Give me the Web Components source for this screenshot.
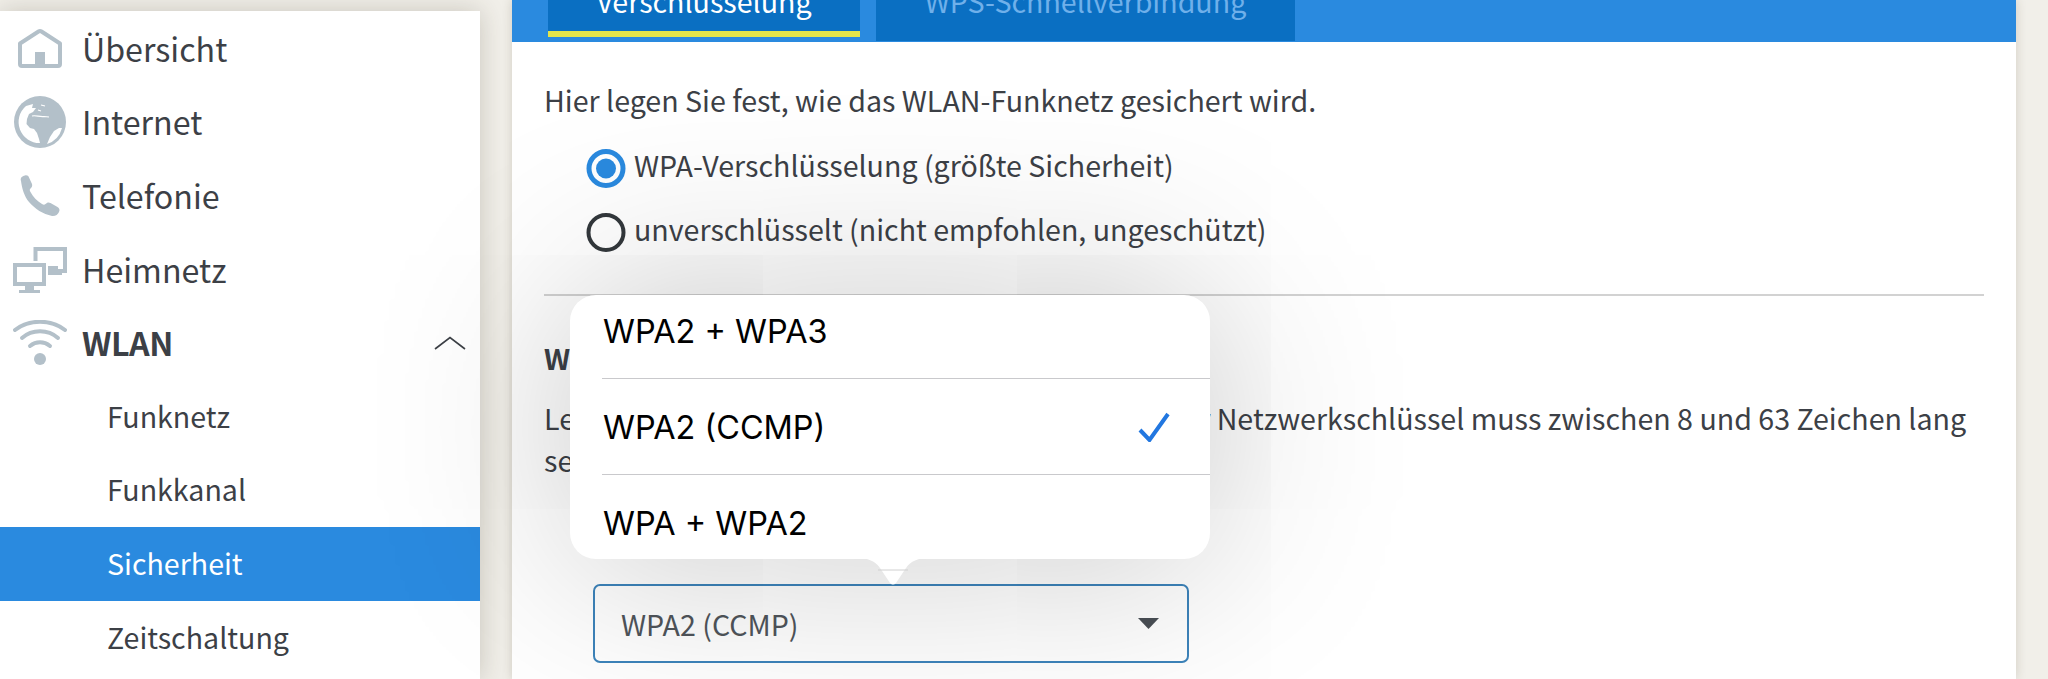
<!DOCTYPE html>
<html lang="de">
<head>
<meta charset="utf-8">
<title>WLAN Sicherheit</title>
<style>
  html, body { margin: 0; height: 679px; overflow: hidden; }
  body {
    display: flex;
    align-items: flex-start;
    background: #f1efe9;
    color: #3c4046;
    font-family: "Noto Sans CJK JP", "Open Sans", sans-serif;
  }
</style>
</head>
<body>
  <side-nav>
    <nav-item icon="home">Übersicht</nav-item>
    <nav-item icon="globe">Internet</nav-item>
    <nav-item icon="phone">Telefonie</nav-item>
    <nav-item icon="network">Heimnetz</nav-item>
    <nav-item icon="wifi" open>WLAN</nav-item>
    <nav-item sub>Funknetz</nav-item>
    <nav-item sub>Funkkanal</nav-item>
    <nav-item sub active>Sicherheit</nav-item>
    <nav-item sub>Zeitschaltung</nav-item>
  </side-nav>
  <main-panel>
    <tab-bar slot="tabs">
      <tab-item active>Verschlüsselung</tab-item>
      <tab-item style="width:419px;margin-left:16px">WPS-Schnellverbindung</tab-item>
    </tab-bar>
    <p class="intro">Hier legen Sie fest, wie das WLAN-Funknetz gesichert wird.</p>
    <radio-row checked>WPA-Verschlüsselung (größte Sicherheit)</radio-row>
    <radio-row>unverschlüsselt (nicht empfohlen, ungeschützt)</radio-row>
    <hr>
    <h2>WLAN-Netzwerkschlüssel</h2>
    <p class="key">Legen Sie einen WLAN-Netzwerkschlüssel fest. Der Netzwerkschlüssel muss zwischen 8 und 63 Zeichen lang sein.</p>
    <select-box>WPA2 (CCMP)</select-box>
    <picker-popover>
      <picker-option>WPA2 + WPA3</picker-option>
      <picker-option selected>WPA2 (CCMP)</picker-option>
      <picker-option last>WPA + WPA2</picker-option>
    </picker-popover>
  </main-panel>

<script>
const ICONS = {
  home: '<svg viewBox="0 0 54 54" width="54" height="54"><path d="M7 21.5 25.5 9.5q1.5-1 3 0L47 21.5V42a2 2 0 0 1-2 2H9a2 2 0 0 1-2-2Z" fill="none" stroke="#b3c0c9" stroke-width="4" stroke-linejoin="round"/><rect x="22" y="30" width="10" height="14" fill="#b3c0c9"/></svg>',
  globe: '<svg viewBox="0 0 54 54" width="54" height="54"><circle cx="27" cy="27" r="26" fill="#b3c0c9"/><path d="M13 11 20 9 19 13 23 13 20 17 16 19 14 24 13.500 29 17 33 21 34 24 38 26 44 27 48A21 21 0 0 1 13 11Z" fill="#fff"/><path d="M49 33 46 33 41 36 37 42 34 49A23 23 0 0 0 49 33Z" fill="#fff"/><path d="M19 21C23 20 26 22 31 21.500L36 22M28 10l4 1M25 15l3 1" fill="none" stroke="#fff" stroke-width="1.200"/></svg>',
  phone: '<svg viewBox="0 0 54 54" width="54" height="54"><path d="M8 12C7 9 9 7 12 6.500 14 6 15.500 7 16 8.500L19 15C19.500 17 19 18 17.500 19.500 16.500 20.500 16.500 21.500 17.500 23 20 28 24 32 29 35 30.500 36 31.500 36 32.500 35 34 33.500 35.500 33 37.500 34L44.500 38C46.500 39 47 41 46 43 45 45.500 42 47.500 39 47 30 45 22 40 16 33 11 27 9 19 8 12Z" fill="#b3c0c9"/></svg>',
  network: '<svg viewBox="0 0 54 46" width="54" height="46"><path d="M22.500 14V2H52V24H40" fill="none" stroke="#b3c0c9" stroke-width="4"/><path d="M35 19H45V23H35ZM35 23H49V28H35Z" fill="#b3c0c9"/><rect x="2" y="18" width="29" height="19" fill="#fff" stroke="#b3c0c9" stroke-width="4"/><path d="M12 39H21V43H12ZM6 43H27V46H6Z" fill="#b3c0c9"/></svg>',
  wifi: '<svg viewBox="0 0 54 46" width="54" height="46"><g fill="none" stroke="#b3c0c9" stroke-width="4" stroke-linecap="round"><path d="M2 10C16-1 38-1 52 10"/><path d="M9 18C19 9 35 9 45 18"/><path d="M17 26c6-5 14-5 20 0"/></g><circle cx="27" cy="39" r="6" fill="#b3c0c9"/></svg>'
};

class SideNav extends HTMLElement {
  constructor() {
    super();
    this.attachShadow({mode: 'open'}).innerHTML = `
      <style>
        :host {
          display: block;
          flex: none;
          width: 480px;
          height: 668px;
          margin-top: 11px;
          padding-top: 1px;
          box-sizing: border-box;
          background: #fff;
          box-shadow: 0 0 24px rgba(60, 50, 30, .22);
        }
      </style>
      <slot></slot>`;
  }
}

class NavItem extends HTMLElement {
  constructor() {
    super();
    const icon = ICONS[this.getAttribute('icon')] || '';
    const chevron = this.hasAttribute('open')
      ? '<svg class="chev" width="32" height="14" viewBox="0 0 32 14"><path d="M1 13 16 1.500 31 13" fill="none" stroke="#3c4046" stroke-width="1.600"/></svg>' : '';
    this.attachShadow({mode: 'open'}).innerHTML = `
      <style>
        :host {
          display: flex;
          align-items: center;
          height: 73.6px;
          padding-left: 13px;
          font-size: 32.2px;
          position: relative;
        }
        .ico { flex: none; width: 54px; display: flex; justify-content: center; }
        svg { display: block; }
        .label { margin-left: 15px; line-height: 44px; padding-bottom: 2px; }
        :host([open]) .label { font-weight: 700; letter-spacing: -.4px; }
        :host([sub]) { padding-left: 107px; font-size: 28.6px; }
        :host([sub]) .ico { display: none; }
        :host([sub]) .label { margin-left: 0; }
        :host([active]) { background: #2a8adf; color: #fff; }
        .chev { margin-left: auto; margin-right: 14px; }
      </style>
      <span class="ico">${icon}</span><span class="label"><slot></slot></span>${chevron}`;
  }
}

class MainPanel extends HTMLElement {
  constructor() {
    super();
    this.attachShadow({mode: 'open'}).innerHTML = `
      <style>
        :host {
          display: block;
          flex: none;
          width: 1504px;
          height: 679px;
          margin-left: 32px;
          background: #fff;
          position: relative;
          box-shadow: 0 0 10px rgba(60, 50, 30, .18);
        }
        .body { padding: 39px 32px 0 32px; font-size: 28.6px; line-height: 42px; }
      </style>
      <slot name="tabs"></slot>
      <div class="body"><slot></slot></div>`;
  }
  connectedCallback() {
    // the plain paragraphs and headings sit in the light DOM, style them from here
    if (document.getElementById('panel-style')) return;
    const s = document.createElement('style');
    s.id = 'panel-style';
    s.textContent = `
      main-panel .intro { margin: -2px 0 13px; }
      main-panel hr { height: 2px; border: 0; margin: 32px 0 41px; background: #d2d2d2; }
      main-panel h2 { margin: 0; font: 700 28.6px/42px "Noto Sans CJK JP", sans-serif; }
      main-panel .key { margin: 18px 0 103px; }`;
    document.head.appendChild(s);
  }
}

class TabBar extends HTMLElement {
  constructor() {
    super();
    this.attachShadow({mode: 'open'}).innerHTML = `
      <style>
        :host {
          display: flex;
          height: 42px;
          padding-left: 36px;
          background: #2a8adf;
          overflow: hidden;
        }
      </style>
      <slot></slot>`;
  }
}

class TabItem extends HTMLElement {
  constructor() {
    super();
    this.attachShadow({mode: 'open'}).innerHTML = `
      <style>
        :host {
          flex: none;
          display: flex;
          align-items: flex-end;
          justify-content: center;
          box-sizing: border-box;
          width: 312px;
          height: 41px;
          padding-bottom: 19px;
          background: #0a6fc2;
          color: #6fb0ea;
          font-size: 28.6px;
          line-height: 42px;
        }
        :host([active]) {
          height: 37px;
          padding-bottom: 9px;
          color: #fff;
          border-bottom: 6px solid #e4e54a;
        }
      </style>
      <slot></slot>`;
  }
}

class RadioRow extends HTMLElement {
  constructor() {
    super();
    const mark = this.hasAttribute('checked')
      ? '<circle cx="20" cy="19.500" r="17" fill="none" stroke="#2a8adf" stroke-width="5"/><circle cx="20" cy="19.500" r="10" fill="#2a8adf"/>'
      : '<circle cx="20" cy="19.500" r="17.500" fill="none" stroke="#33383c" stroke-width="4"/>';
    this.attachShadow({mode: 'open'}).innerHTML = `
      <style>
        :host {
          display: flex;
          align-items: center;
          gap: 8px;
          height: 64px;
          padding-left: 42px;
        }
        svg { flex: none; display: block; margin-top: 4px; }
        span { padding-bottom: 2px; }
      </style>
      <svg width="40" height="39" viewBox="0 0 40 39">${mark}</svg><span><slot></slot></span>`;
  }
}

class SelectBox extends HTMLElement {
  constructor() {
    super();
    this.attachShadow({mode: 'open'}).innerHTML = `
      <style>
        :host {
          display: flex;
          align-items: center;
          justify-content: space-between;
          box-sizing: border-box;
          width: 596px;
          height: 79px;
          margin-left: 49px;
          padding: 0 28px 0 26px;
          border: 2px solid #3d84bb;
          border-radius: 7px;
          font-size: 28.6px;
          color: #50555b;
        }
        svg { display: block; }
      </style>
      <span><slot></slot></span>
      <svg width="21" height="11" viewBox="0 0 21 11"><path d="M0 0H21L10.500 11Z" fill="#4a4f55"/></svg>`;
  }
}

class PickerPopover extends HTMLElement {
  constructor() {
    super();
    this.attachShadow({mode: 'open'}).innerHTML = `
      <style>
        :host {
          display: block;
          position: absolute;
          left: 58px;
          top: 295px;
          width: 640px;
          height: 264px;
          border-radius: 26px;
          background: #fff;
          box-shadow: 0 0 200px rgba(0, 0, 0, .24);
          font-family: Inter, "Liberation Sans", sans-serif;
          color: #000;
        }
        .list { height: 100%; overflow: hidden; border-radius: inherit; }
        .tail { position: absolute; left: 285px; top: 263px; display: block; }
      </style>
      <div class="list"><slot></slot></div>
      <svg class="tail" width="76" height="28" viewBox="0 0 76 28">
        <path d="M0 0C14 0 20 3 25 10L35 25Q38 28 41 25L51 10C56 3 62 0 76 0Z" fill="#fff"/>
        <path d="M23 12H53" stroke="#d0d0d0" stroke-width="1"/>
      </svg>`;
  }
}

class PickerOption extends HTMLElement {
  constructor() {
    super();
    const check = this.hasAttribute('selected')
      ? '<svg width="32" height="30" viewBox="0 0 32 30"><path d="M2 18 11.500 28 30 2" fill="none" stroke="#2277e0" stroke-width="4"/></svg>' : '';
    this.attachShadow({mode: 'open'}).innerHTML = `
      <style>
        :host {
          display: flex;
          align-items: center;
          justify-content: space-between;
          box-sizing: border-box;
          height: 96px;
          margin-left: 32px;
          padding-right: 40px;
          border-bottom: 1px solid #c9c9cc;
          font-size: 32.4px;
        }
        :host(:first-child) { margin-top: -12px; }
        :host([last]) { border-bottom: 0; }
        span { padding: 2px 0 0 1px; }
        svg { display: block; }
      </style>
      <span><slot></slot></span>${check}`;
  }
}

customElements.define('side-nav', SideNav);
customElements.define('nav-item', NavItem);
customElements.define('main-panel', MainPanel);
customElements.define('tab-bar', TabBar);
customElements.define('tab-item', TabItem);
customElements.define('radio-row', RadioRow);
customElements.define('select-box', SelectBox);
customElements.define('picker-popover', PickerPopover);
customElements.define('picker-option', PickerOption);
</script>
</body>
</html>
